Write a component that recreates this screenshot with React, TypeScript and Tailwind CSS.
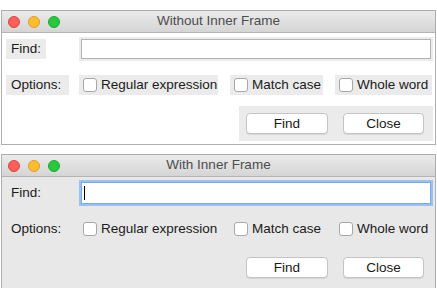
import React from "react";

const font = { fontFamily: '"Liberation Sans", Arial, sans-serif' };

function TitleBar({ title }: { title: string }) {
  return (
    <div className="relative flex h-[22px] items-center border-b border-[#b4b4b4] bg-gradient-to-b from-[#ebebeb] to-[#d5d5d5]">
      <div className="flex gap-[8px] pl-[6px]">
        <span className="h-[12px] w-[12px] rounded-full border border-[#e0443e] bg-[#fe5f57]" />
        <span className="h-[12px] w-[12px] rounded-full border border-[#dea123] bg-[#febc2e]" />
        <span className="h-[12px] w-[12px] rounded-full border border-[#1aab29] bg-[#28c840]" />
      </div>
      <div className="absolute inset-0 flex items-center justify-center text-[13.5px] text-[#4d4d4d]">
        {title}
      </div>
    </div>
  );
}

function Check({ label, framed, w }: { label: string; framed: boolean; w: string }) {
  return (
    <div className={`flex h-[20px] items-center pl-[4px] ${w} ${framed ? "bg-[#ebebeb]" : ""}`}>
      <span className="h-[14px] w-[14px] rounded-[3px] border border-[#a8a8a8] bg-white" />
      <span className="ml-[4px] text-[13.5px] text-[#1a1a1a]">{label}</span>
    </div>
  );
}

function Button({ label }: { label: string }) {
  return (
    <button className="h-[21px] rounded-[4px] border border-[#c4c4c4] bg-white text-[13.5px] text-[#1a1a1a] shadow-[0_1px_0_rgba(0,0,0,0.08)]">
      {label}
    </button>
  );
}

function Dialog({ title, framed }: { title: string; framed: boolean }) {
  const bg = framed ? "bg-[#ebebeb]" : "";
  return (
    <div className="w-[435px] overflow-hidden border border-[#aeaeae]" style={font}>
      <TitleBar title={title} />
      <div className={`flex h-[111px] flex-col ${framed ? "bg-white" : "bg-[#e8e8e8]"}`}>
        {/* find row */}
        <div className="mt-[4px] flex h-[24px] items-center">
          <div className={`ml-[4px] flex h-[20px] w-[40px] items-center pl-[5px] text-[13.5px] text-[#1a1a1a] ${bg}`}>
            Find:
          </div>
          <div className={`ml-[33px] flex h-[24px] w-[354px] items-center px-[2px] ${bg}`}>
            {framed ? (
              <div className="h-[20px] w-full border border-[#b3b3b3] bg-white" />
            ) : (
              <div className="flex h-[22px] w-full items-center border border-[#7fa9e6] bg-white pl-[2px] ring-[2px] ring-[#9cc0f2]">
                <span className="h-[14px] w-[1px] bg-black" />
              </div>
            )}
          </div>
        </div>
        {/* options row */}
        <div className="mt-[14px] flex h-[20px] items-center">
          <div className={`ml-[4px] flex h-[20px] w-[63px] items-center pl-[5px] text-[13.5px] text-[#1a1a1a] ${bg}`}>
            Options:
          </div>
          <div className="ml-[10px] flex gap-[12px]">
            <Check label="Regular expression" framed={framed} w="w-[139px]" />
            <Check label="Match case" framed={framed} w="w-[93px]" />
            <Check label="Whole word" framed={framed} w="w-[97px]" />
          </div>
        </div>
        {/* buttons */}
        <div className="mt-[11px] flex">
          <div className={`ml-[237px] flex h-[35px] w-[194px] items-center gap-[15px] pl-[7px] ${bg}`}>
            <div className="flex w-[82px] flex-col">
              <Button label="Find" />
            </div>
            <div className="flex w-[81px] flex-col">
              <Button label="Close" />
            </div>
          </div>
        </div>
      </div>
    </div>
  );
}

export default function App() {
  return (
    <div className="h-[288px] w-[437px] bg-white pl-[1px] pt-[10px]">
      <Dialog title="Without Inner Frame" framed={true} />
      <div className="h-[9px]" />
      <Dialog title="With Inner Frame" framed={false} />
    </div>
  );
}
